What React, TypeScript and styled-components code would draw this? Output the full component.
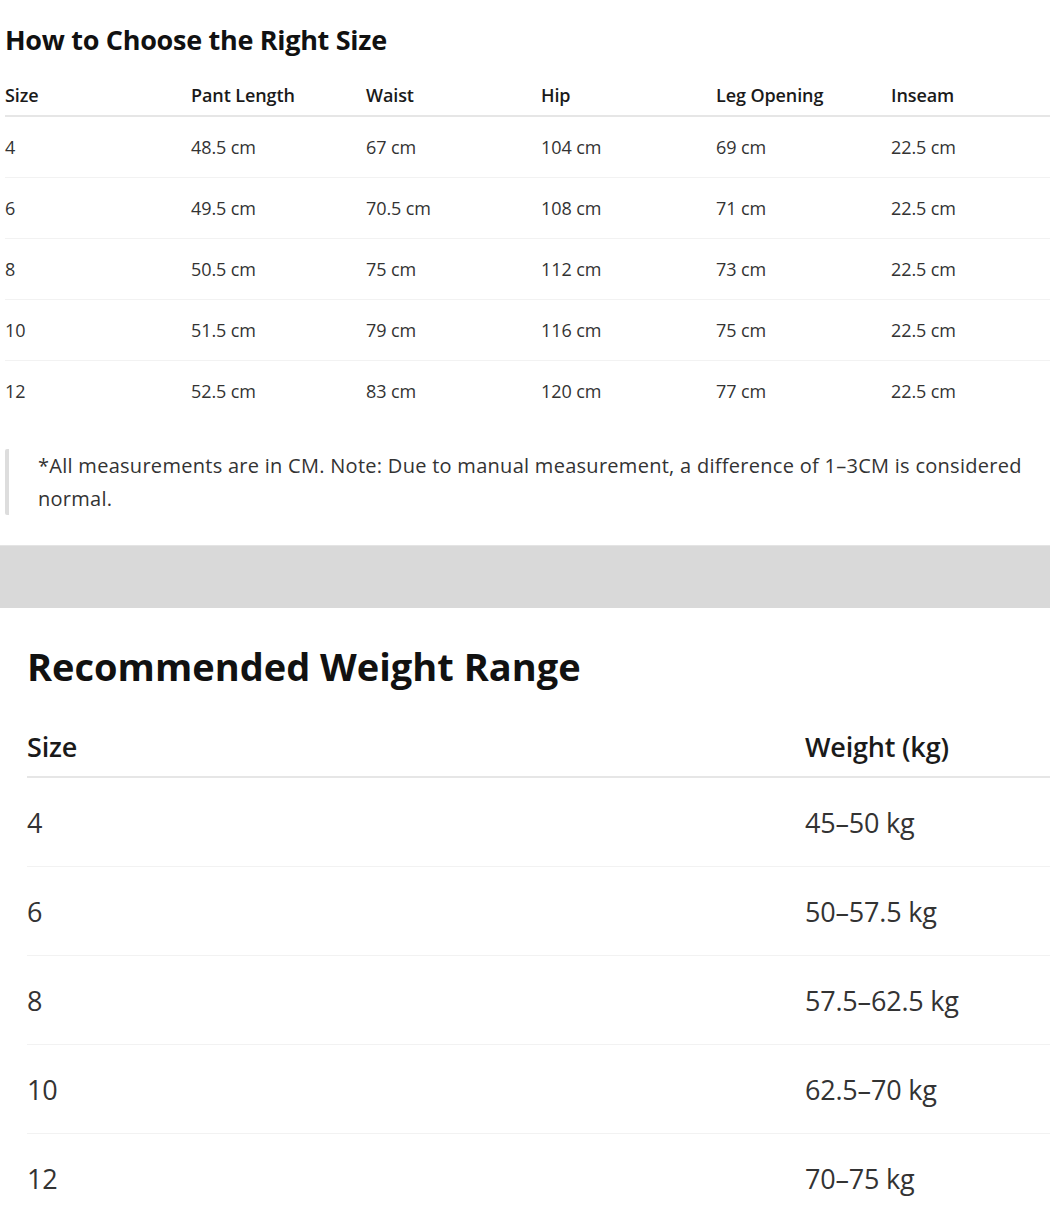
import React from "react";
import styled, { createGlobalStyle } from "styled-components";

const GlobalStyle = createGlobalStyle`
  html, body {
    margin: 0;
    padding: 0;
    background: #ffffff;
  }
  body {
    font-family: "Open Sans", "Noto Sans", sans-serif;
    color: #222222;
  }
`;

const Page = styled.div`
  width: 1050px;
  display: flex;
  flex-direction: column;
`;

const SizeSection = styled.section`
  padding: 24px 0 0 5px;
`;

const SmallTitle = styled.h2`
  margin: 0 0 18px;
  font-size: 27px;
  line-height: 32px;
  font-weight: 700;
  color: #111111;
  letter-spacing: -0.3px;
`;

const Row = styled.div<{ $cols: string; $head?: boolean; $big?: boolean; $last?: boolean }>`
  display: grid;
  grid-template-columns: ${(p) => p.$cols};
  align-items: center;
  height: ${(p) => (p.$big ? (p.$head ? "60px" : "88px") : p.$head ? "41px" : "60px")};
  border-bottom: ${(p) =>
    p.$last ? "none" : p.$head ? "2px solid #e6e6e6" : "1px solid #f2f2f2"};
  font-size: ${(p) => (p.$big ? "27px" : "18px")};
  font-weight: ${(p) => (p.$head ? 600 : 400)};
  color: ${(p) => (p.$head ? "#1a1a1a" : "#333333")};
  letter-spacing: ${(p) => (p.$big ? "-0.2px" : "-0.1px")};
`;

const Cell = styled.div`
  white-space: nowrap;
`;

const Note = styled.blockquote`
  margin: 28px 0 0;
  padding: 0 0 0 29px;
  border-left: 4px solid #dddddd;
  border-radius: 2px;
  font-size: 20px;
  line-height: 33px;
  color: #333333;
  letter-spacing: 0.28px;
`;

const Band = styled.div`
  margin-top: 30px;
  height: 62px;
  background: #d9d9d9;
  border-top: 1px solid #e4e4e4;
`;

const WeightSection = styled.section`
  padding: 34px 0 0 27px;
`;

const BigTitle = styled.h2`
  margin: 0 0 26px;
  font-size: 38px;
  line-height: 48px;
  font-weight: 700;
  color: #111111;
`;

const sizeCols = "186px repeat(5, 175px)";
const weightCols = "778px 1fr";

const sizeRows = [
  ["4", "48.5 cm", "67 cm", "104 cm", "69 cm", "22.5 cm"],
  ["6", "49.5 cm", "70.5 cm", "108 cm", "71 cm", "22.5 cm"],
  ["8", "50.5 cm", "75 cm", "112 cm", "73 cm", "22.5 cm"],
  ["10", "51.5 cm", "79 cm", "116 cm", "75 cm", "22.5 cm"],
  ["12", "52.5 cm", "83 cm", "120 cm", "77 cm", "22.5 cm"],
];

const weightRows = [
  ["4", "45–50 kg"],
  ["6", "50–57.5 kg"],
  ["8", "57.5–62.5 kg"],
  ["10", "62.5–70 kg"],
  ["12", "70–75 kg"],
];

export default function App() {
  return (
    <Page>
      <GlobalStyle />
      <SizeSection>
        <SmallTitle>How to Choose the Right Size</SmallTitle>
        <Row $cols={sizeCols} $head>
          {["Size", "Pant Length", "Waist", "Hip", "Leg Opening", "Inseam"].map((h) => (
            <Cell key={h}>{h}</Cell>
          ))}
        </Row>
        {sizeRows.map((r, i) => (
          <Row key={r[0]} $cols={sizeCols} $last={i === sizeRows.length - 1}>
            {r.map((c, j) => (
              <Cell key={j}>{c}</Cell>
            ))}
          </Row>
        ))}
        <Note>
          *All measurements are in CM. Note: Due to manual measurement, a difference of 1–3CM is
          considered normal.
        </Note>
      </SizeSection>
      <Band />
      <WeightSection>
        <BigTitle>Recommended Weight Range</BigTitle>
        <Row $cols={weightCols} $head $big>
          <Cell>Size</Cell>
          <Cell>Weight (kg)</Cell>
        </Row>
        {weightRows.map((r, i) => (
          <Row key={r[0]} $cols={weightCols} $big $last={i === weightRows.length - 1}>
            <Cell>{r[0]}</Cell>
            <Cell>{r[1]}</Cell>
          </Row>
        ))}
      </WeightSection>
    </Page>
  );
}
